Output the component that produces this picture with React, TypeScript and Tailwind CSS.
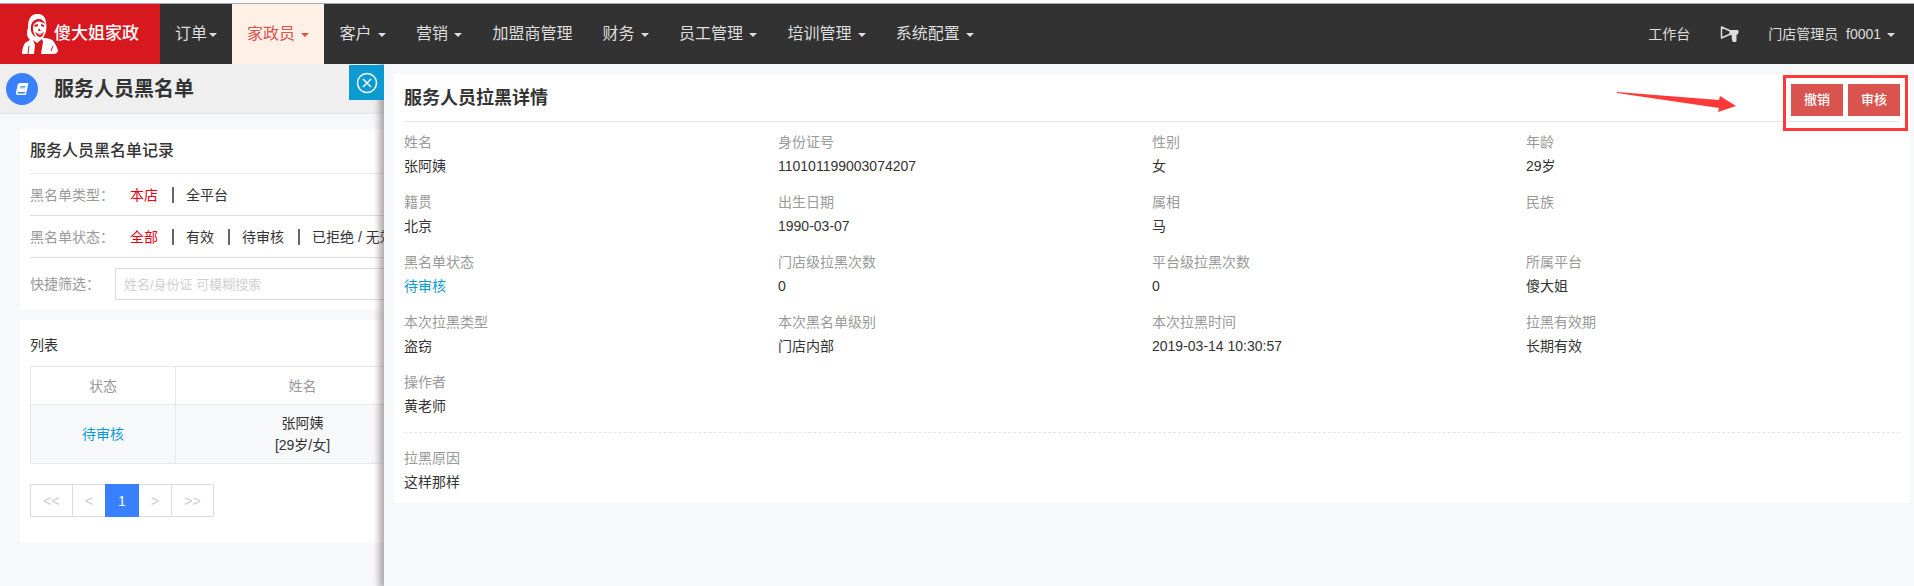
import { FaBook } from "react-icons/fa";

interface NavItem {
  label: string;
  caret?: boolean;
  tight?: boolean;
  active?: boolean;
}

interface Field {
  label: string;
  value: string;
  highlight?: boolean;
}

const navItems: NavItem[] = [
  { label: "订单", caret: true, tight: true },
  { label: "家政员", caret: true, active: true },
  { label: "客户", caret: true },
  { label: "营销", caret: true },
  { label: "加盟商管理" },
  { label: "财务", caret: true },
  { label: "员工管理", caret: true },
  { label: "培训管理", caret: true },
  { label: "系统配置", caret: true },
];

const fields: Field[] = [
  { label: "姓名", value: "张阿姨" },
  { label: "身份证号", value: "110101199003074207" },
  { label: "性别", value: "女" },
  { label: "年龄", value: "29岁" },
  { label: "籍贯", value: "北京" },
  { label: "出生日期", value: "1990-03-07" },
  { label: "属相", value: "马" },
  { label: "民族", value: "" },
  { label: "黑名单状态", value: "待审核", highlight: true },
  { label: "门店级拉黑次数", value: "0" },
  { label: "平台级拉黑次数", value: "0" },
  { label: "所属平台", value: "傻大姐" },
  { label: "本次拉黑类型", value: "盗窃" },
  { label: "本次黑名单级别", value: "门店内部" },
  { label: "本次拉黑时间", value: "2019-03-14 10:30:57" },
  { label: "拉黑有效期", value: "长期有效" },
  { label: "操作者", value: "黄老师" },
];

const Caret = () => (
  <span className="ml-0.5 inline-block border-x-4 border-t-4 border-x-transparent border-t-current align-middle" />
);

const Logo = () => (
  <a href="#" className="flex w-40 items-center bg-[#d7191f] pl-[22px] text-white">
    <svg width="36" height="40" viewBox="0 0 36 40" className="shrink-0" aria-hidden="true">
      {/* head scarf and coat */}
      <path
        fill="currentColor"
        d="M14 0c6-1 10 3 10 9 1 5 0 10-2 13l-1 2c5 0 9 1 11 4 2 3 4 7 4 9-1 2-2 3-4 3H0c0-4 1-8 3-11l5-3C5 23 4 19 6 14 6 6 8 1 14 0z"
      />
      {/* face shading */}
      <path fill="#d7191f" d="M9 12c1-5 4-7 8-7 3 0 5 2 6 5-3-2-6-3-8-2-3 1-4 3-4 6 0 4 1 6 3 9-4-2-6-6-5-11z" />
      <path fill="#d7191f" d="M12 11l4-1v2l-3 1zM19 10l3 1v2l-3-1zM17 14l2 3h-3zM13 18c3 2 6 2 9 0-1 3-2 5-4 5s-4-2-5-5z" />
      <path fill="#d7191f" d="M11 26l4 3 5-4 1 3-2 12h-7l1-9z" />
      <path d="M7 32l-1 8M31 32l-2 5" stroke="#d7191f" fill="none" />
      <path fill="currentColor" d="M14 19c2 1 5 1 7 0l-3 2z" />
    </svg>
    <span className="-ml-1 text-[17px] font-medium whitespace-nowrap">傻大姐家政</span>
  </a>
);

const Header = () => (
  <header className="shrink-0 border-t-3 border-[#fafafa]">
    <div className="flex h-[61px] border-t border-[#aaa] bg-[#323232] text-[#ddd]">
      <Logo />
      <nav className="flex text-base">
        {navItems.map((item) => (
          <a
            key={item.label}
            href="#"
            className={`flex items-center px-[15px] whitespace-nowrap ${item.active ? "bg-[#fff0e6] text-[#d9534f]" : ""}`}
          >
            <span>
              {item.label}
              {item.caret && !item.tight && " "}
              {item.caret && <Caret />}
            </span>
          </a>
        ))}
      </nav>
      <div className="ml-auto flex items-center pr-[19px] text-sm whitespace-nowrap">
        <a href="#">工作台</a>
        <a href="#" aria-label="公告" className="mr-[29px] ml-[30px]">
          <svg width="19" height="17" viewBox="0 0 19 17" fill="none" stroke="currentColor" aria-hidden="true">
            <path d="M1.500 1v11l9-4V5z" strokeWidth="1.500" strokeLinejoin="round" />
            <path d="M10 4.500h8v3l-2 1v7h-3l-1-4 1-2-3-1z" fill="currentColor" />
          </svg>
        </a>
        <a href="#">
          门店管理员 &nbsp;f0001 <Caret />
        </a>
      </div>
    </div>
  </header>
);

interface FilterRowProps {
  label: string;
  options: string[];
}

const FilterRow = ({ label, options }: FilterRowProps) => (
  <div className="flex h-[42px] items-center border-b border-[#ddd]">
    <span className="w-[100px] shrink-0 text-[#999]">{label}</span>
    {options.map((option, i) => (
      <span key={option} className="flex items-center">
        {i > 0 && <span className="mr-3 ml-3.5 h-4 w-0.5 bg-[#666]" />}
        <a href="#" className={i === 0 ? "text-[#e60012]" : "text-[#333]"}>
          {option}
        </a>
      </span>
    ))}
  </div>
);

const pageButton = "h-[33px] border border-[#ddd] text-[#ccc]";

const BlacklistPage = () => (
  <section className="w-96 shrink-0 overflow-hidden whitespace-nowrap">
    <div className="flex h-[50px] items-center border-b border-[#e2e4e6] bg-[#efefef] pl-1.5">
      <span className="flex size-8 items-center justify-center rounded-full bg-[#3880ff] text-white">
        <FaBook size={12} className="-skew-x-12" />
      </span>
      <h1 className="ml-4 text-xl font-bold">服务人员黑名单</h1>
    </div>

    <div className="mt-[15px] ml-5 w-[600px] bg-white px-2.5 pb-2.5">
      <h2 className="flex h-[45px] items-center border-b border-[#e8e8e8] text-base font-medium">
        服务人员黑名单记录
      </h2>
      <FilterRow label="黑名单类型：" options={["本店", "全平台"]} />
      <FilterRow label="黑名单状态：" options={["全部", "有效", "待审核", "已拒绝 / 无效"]} />
      <div className="flex items-center pt-2.5">
        <label htmlFor="keyword" className="w-[85px] text-[#999]">
          快捷筛选：
        </label>
        <input
          id="keyword"
          type="text"
          placeholder="姓名/身份证 可模糊搜索"
          className="h-8 w-[400px] border border-[#ddd] px-2 text-[13px] placeholder:text-[#d0d0d0]"
        />
      </div>
    </div>

    <div className="mt-2.5 ml-5 w-[600px] bg-white px-2.5 pt-3.5 pb-[26px]">
      <h3 className="leading-[22px]">列表</h3>
      <table className="mt-2.5 w-[400px] table-fixed border-collapse text-center leading-[22px]">
        <thead>
          <tr className="h-[38px] text-[#999]">
            <th className="w-[145px] border border-[#e8e8e8] font-normal">状态</th>
            <th className="border border-[#e8e8e8] font-normal">姓名</th>
          </tr>
        </thead>
        <tbody>
          <tr className="h-[59px] bg-[#f7f8fa]">
            <td className="border border-[#e8e8e8] text-[#0c9bd0]">待审核</td>
            <td className="border border-[#e8e8e8]">
              张阿姨
              <br />
              [29岁/女]
            </td>
          </tr>
        </tbody>
      </table>
      <div className="mt-5 flex">
        <button className={`${pageButton} w-[43px]`}>&lt;&lt;</button>
        <button className={`${pageButton} w-8 border-x-0`}>&lt;</button>
        <button className="h-[33px] w-[34px] bg-[#3880ff] font-medium text-white">1</button>
        <button className={`${pageButton} w-8 border-x-0`}>&gt;</button>
        <button className={`${pageButton} w-[43px]`}>&gt;&gt;</button>
      </div>
    </div>
  </section>
);

const FieldItem = ({ label, value, highlight }: Field) => (
  <div className="h-[60px] leading-6">
    <dt className="text-[#999]">{label}</dt>
    <dd className={highlight ? "text-[#0c9bd0]" : ""}>{value}</dd>
  </div>
);

const actionButton = "h-8 w-[52px] bg-[#d9534f] text-[13px] font-medium text-white";

const DetailDrawer = () => (
  <aside className="relative flex-1 bg-[#f7f8fa] pt-2.5 pr-1 pl-2.5 shadow-[-3px_0_6px_2px_rgba(90,75,75,0.45)]">
    <button
      aria-label="关闭"
      className="absolute top-px -left-[35px] flex size-[35px] items-center justify-center bg-[#0c9bd0] text-white"
    >
      <svg width="22" height="22" viewBox="0 0 22 22" fill="none" stroke="currentColor" strokeWidth="1.500">
        <circle cx="11" cy="11" r="9.500" />
        <path d="M7 7l8 8M15 7l-8 8" />
      </svg>
    </button>

    <div className="bg-white px-2.5 pb-[9px]">
      <div className="flex h-12 items-center justify-between border-b border-[#e8e8e8]">
        <h2 className="text-lg font-bold">服务人员拉黑详情</h2>
        <div className="relative mb-[5px] flex gap-[5px] self-end">
          <button className={actionButton}>撤销</button>
          <button className={actionButton}>审核</button>
          {/* callout around the two actions */}
          <span className="pointer-events-none absolute -inset-x-2 -top-[9px] -bottom-[15px] border-3 border-[#ff3838]" />
          <svg
            width="120"
            height="24"
            viewBox="0 0 120 24"
            className="pointer-events-none absolute top-1.5 right-[164px]"
            aria-hidden="true"
          >
            <path fill="#ff3838" d="M1 2l102 8 1-4 16 10-18 6 1-4L1 3z" />
          </svg>
        </div>
      </div>
      <dl className="grid grid-cols-4 pt-2">
        {fields.map((field) => (
          <FieldItem key={field.label} {...field} />
        ))}
      </dl>
      <dl className="mt-0.5 border-t border-dashed border-[#e4e4e4] pt-[13px] leading-6">
        <dt className="text-[#999]">拉黑原因</dt>
        <dd>这样那样</dd>
      </dl>
    </div>
  </aside>
);

const App = () => (
  <div className="flex min-h-screen flex-col bg-[#f7f8fa] font-['Liberation_Sans','Noto_Sans_CJK_SC',sans-serif] text-sm text-[#333]">
    <Header />
    <main className="flex flex-1 overflow-hidden">
      <BlacklistPage />
      <DetailDrawer />
    </main>
  </div>
);

export default App;
